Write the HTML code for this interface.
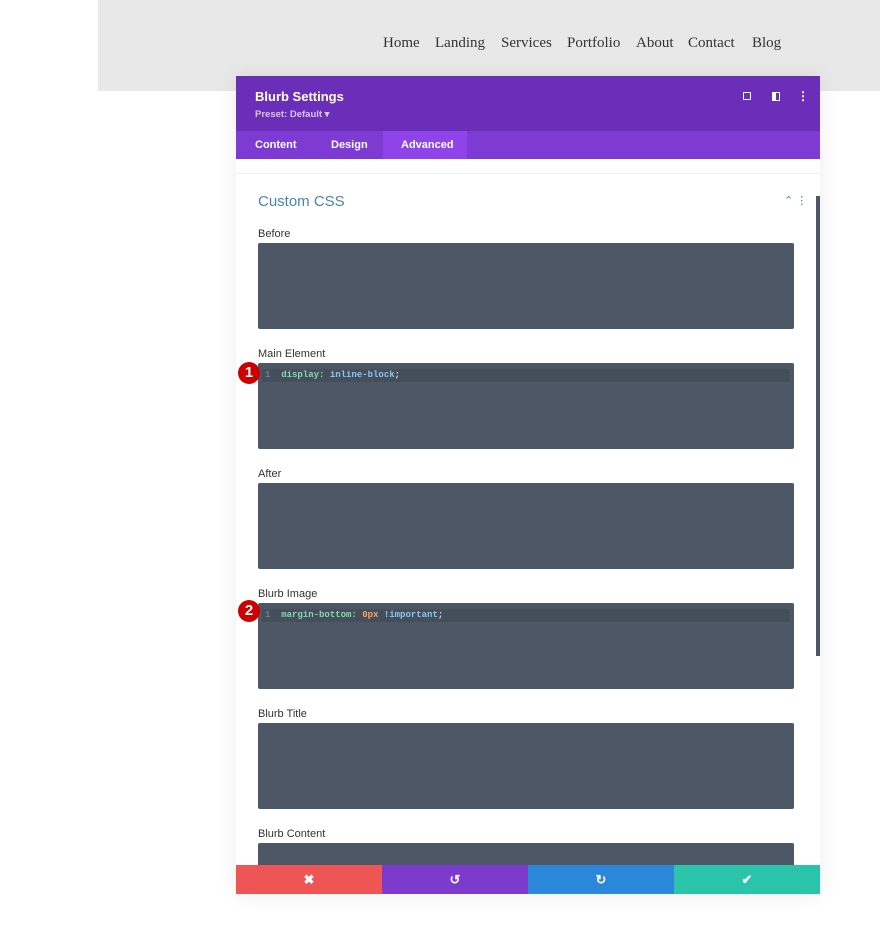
<!DOCTYPE html>
<html><head><style>
*{margin:0;padding:0;box-sizing:border-box}
body{width:880px;height:937px;background:#fff;position:relative;overflow:hidden;font-family:"Liberation Sans",sans-serif}
.hdr{position:absolute;left:98px;top:0;width:782px;height:91px;background:#e8e8e8}
.nav{position:absolute;top:35px;font-family:"Liberation Serif",serif;font-size:15px;color:#333}
.modal{position:absolute;left:236px;top:76px;width:584px;height:818px;background:#fff;box-shadow:0 0 20px rgba(0,0,0,.08)}
.top{height:55px;background:#6a2eb8;position:relative;color:#fff}
.tabs{height:28px;background:#7d3bd3;position:relative;font-size:11px;font-weight:bold;color:#fff}
.tabs span{position:absolute;top:8px}
.lbl{position:absolute;left:22px;font-size:11px;color:#333}
.box{position:absolute;left:22px;width:536px;height:86px;background:#4d5765;border-radius:2px}
.line{position:absolute;left:4px;top:6px;width:528px;height:13px;background:#454e5b}
.code{position:absolute;left:7px;top:7px;font-family:"Liberation Mono",monospace;font-size:9px;font-weight:bold;color:#7fdba9;white-space:pre}
.badge{position:absolute;left:2px;width:22px;height:22px;border-radius:50%;background:#c00;color:#fff;font-size:15px;font-weight:bold;text-align:center;line-height:22px}
.btns{position:absolute;left:0;top:789px;width:584px;height:29px;display:flex;color:#fff;font-size:13px;font-weight:bold}
.btns div{flex:1;text-align:center;line-height:29px}
</style></head><body>
<div class="hdr"></div>
<span class="nav" style="left:383px">Home</span>
<span class="nav" style="left:435px">Landing</span>
<span class="nav" style="left:501px">Services</span>
<span class="nav" style="left:567px">Portfolio</span>
<span class="nav" style="left:636px">About</span>
<span class="nav" style="left:688px">Contact</span>
<span class="nav" style="left:752px">Blog</span>
<div class="modal">
<div class="top">
<div style="position:absolute;left:19px;top:13px;font-size:13px;font-weight:bold">Blurb Settings</div>
<div style="position:absolute;left:19px;top:33px;font-size:9.5px;font-weight:bold;color:#d8c6f0">Preset: Default ▾</div>
<div style="position:absolute;left:507px;top:16px;width:8px;height:8px;border:1.5px solid #fff;border-radius:1px"></div>
<div style="position:absolute;left:536px;top:16px;width:8px;height:9px;border:1.5px solid #fff;border-left-width:4px"></div>
<div style="position:absolute;left:561px;top:13px;font-size:12px;font-weight:bold">⋮</div>
</div>
<div class="tabs">
<span style="left:19px">Content</span><span style="left:95px">Design</span>
<div style="position:absolute;left:147px;top:0;width:84px;height:28px;background:#8e44e8"></div>
<span style="left:165px">Advanced</span>
</div>
<div style="position:absolute;left:0;top:97px;width:584px;height:1px;background:#f0f0f4"></div>
<div style="position:absolute;left:22px;top:117px;font-size:15px;color:#4a84b1">Custom CSS</div>
<div style="position:absolute;left:548px;top:118px;font-size:11px;color:#4a84b1">⌃ ⋮</div>
<div style="position:absolute;left:580px;top:120px;width:4px;height:460px;background:#4d5765"></div>
<div class="lbl" style="top:152px">Before</div>
<div class="box" style="top:167px"></div>
<div class="lbl" style="top:272px">Main Element</div>
<div class="box" style="top:287px"><div class="line"></div><div class="code"><span style="color:#6b7a8c">1</span>  display: <span style="color:#8ac6f2">inline-block</span><span style="color:#ddd">;</span></div></div>
<div class="badge" style="top:286px">1</div>
<div class="lbl" style="top:392px">After</div>
<div class="box" style="top:407px"></div>
<div class="lbl" style="top:512px">Blurb Image</div>
<div class="box" style="top:527px"><div class="line"></div><div class="code"><span style="color:#6b7a8c">1</span>  margin-bottom: <span style="color:#f5a65b">0px</span> <span style="color:#8ac6f2">!important</span><span style="color:#ddd">;</span></div></div>
<div class="badge" style="top:524px">2</div>
<div class="lbl" style="top:632px">Blurb Title</div>
<div class="box" style="top:647px"></div>
<div class="lbl" style="top:752px">Blurb Content</div>
<div class="box" style="top:767px;height:30px"></div>
<div class="btns"><div style="background:#ef5555">✖</div><div style="background:#7d3bce">↺</div><div style="background:#2b87da">↻</div><div style="background:#29c4a9">✔</div></div>
</div>
</body></html>
